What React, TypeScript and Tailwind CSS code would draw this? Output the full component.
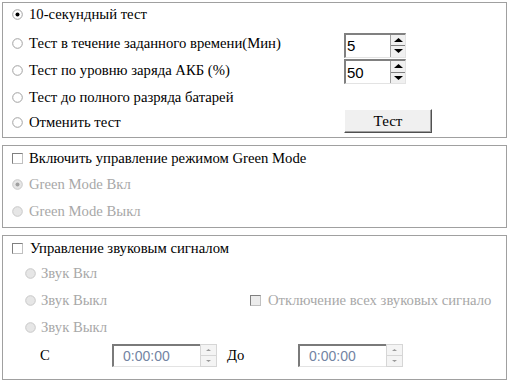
import React from "react";

function Radio({ checked = false, disabled = false }: { checked?: boolean; disabled?: boolean }) {
  return (
    <svg width="11" height="11" viewBox="0 0 11 11" className="shrink-0">
      <circle cx="5.5" cy="5.5" r="4.8" fill={disabled ? "#e6e6e6" : "#ffffff"} stroke={disabled ? "#c8c8c8" : "#a0a0a0"} strokeWidth="1" />
      {checked && <circle cx="5.5" cy="5.5" r="2" fill={disabled ? "#a0a0a0" : "#000000"} />}
    </svg>
  );
}

function Check({ disabled = false }: { disabled?: boolean }) {
  return (
    <div
      className={`w-[11px] h-[11px] shrink-0 border border-t-[#808080] border-l-[#808080] border-r-[#c0c0c0] border-b-[#c0c0c0] ${
        disabled ? "bg-[#ececec]" : "bg-white"
      }`}
    />
  );
}

function Arrow({ up, color = "#000", size = 4 }: { up: boolean; color?: string; size?: number }) {
  return (
    <svg width={size * 2 + 1} height={size} viewBox={`0 0 ${size * 2 + 1} ${size}`}>
      {up ? (
        <polygon points={`0,${size} ${size * 2 + 1},${size} ${size + 0.5},0`} fill={color} />
      ) : (
        <polygon points={`0,0 ${size * 2 + 1},0 ${size + 0.5},${size}`} fill={color} />
      )}
    </svg>
  );
}

function Spin({ value }: { value: string }) {
  return (
    <div className="flex w-[62px] h-[25px] border-t-2 border-l-2 border-t-[#808080] border-l-[#808080] border-r border-b border-r-[#e3e3e3] border-b-[#e3e3e3] bg-white">
      <div className="flex-1 flex items-center pl-[1px] font-['Liberation_Sans'] text-[15px] text-black leading-none">
        {value}
      </div>
      <div className="w-[15px] flex flex-col border-l border-l-[#a0a0a0]">
        <div className="flex-1 flex items-center justify-center bg-[#f0f0f0] border-b border-b-[#808080]">
          <Arrow up size={4} />
        </div>
        <div className="flex-1 flex items-center justify-center bg-[#f0f0f0]">
          <Arrow up={false} size={4} />
        </div>
      </div>
    </div>
  );
}

function TimeBox() {
  return (
    <div className="flex h-[23px] w-[105px]">
      <div className="w-[88px] h-full flex items-center pl-[9px] border-t-2 border-l-2 border-t-[#7a7a7a] border-l-[#7a7a7a] border-b border-b-[#e3e3e3] bg-white font-['Liberation_Sans'] text-[14px] text-[#7384a3] leading-none">
        0:00:00
      </div>
      <div className="w-[17px] h-full flex flex-col">
        <div className="flex-1 flex items-center justify-center bg-[#f4f4f4] border border-[#d6d6d6]">
          <Arrow up size={2} color="#9a9a9a" />
        </div>
        <div className="flex-1 flex items-center justify-center bg-[#f4f4f4] border border-t-0 border-[#d6d6d6]">
          <Arrow up={false} size={2} color="#9a9a9a" />
        </div>
      </div>
    </div>
  );
}

function Panel({ className = "", children }: { className?: string; children: React.ReactNode }) {
  return <div className={`mx-[2px] border border-[#a0a0a0] ${className}`}>{children}</div>;
}

export default function App() {
  const dis = "text-[#a8a8a8]";
  return (
    <div className="w-[510px] h-[382px] bg-white pt-[2px] font-['Liberation_Serif'] text-[14.7px] text-black leading-none overflow-hidden">
      <Panel className="w-[505px] h-[136px] pb-[3px]">
        <div className="flex items-center h-[22px] pl-[9px] gap-[6px]">
          <Radio checked />
          <span>10-секундный тест</span>
        </div>
        <div className="flex items-center h-[24px] mt-[8px] pl-[9px]">
          <div className="flex items-center gap-[6px] w-[332px] -mt-[3px]">
            <Radio />
            <span>Тест в течение заданного времени(Мин)</span>
          </div>
          <Spin value="5" />
        </div>
        <div className="flex items-center h-[25px] mt-[2px] pl-[9px]">
          <div className="flex items-center gap-[6px] w-[332px] -mt-[2px]">
            <Radio />
            <span>Тест по уровню заряда АКБ (%)</span>
          </div>
          <Spin value="50" />
        </div>
        <div className="flex items-center h-[22px] mt-[2px] pl-[9px] gap-[6px]">
          <Radio />
          <span>Тест до полного разряда батарей</span>
        </div>
        <div className="flex items-center h-[24px] mt-[1px] pl-[9px]">
          <div className="flex items-center gap-[6px] w-[332px] mt-[3px]">
            <Radio />
            <span>Отменить тест</span>
          </div>
          <button className="w-[88px] h-[24px] bg-[#f0f0f0] border border-t-white border-l-white border-r-[#505050] border-b-[#505050] shadow-[inset_-1px_-1px_0_#a0a0a0] text-[15px] leading-none font-['Liberation_Serif']">
            Тест
          </button>
        </div>
      </Panel>

      <Panel className="w-[505px] h-[83px] mt-[7px]">
        <div className="flex items-center h-[25px] pl-[9px] gap-[6px]">
          <Check />
          <span>Включить управление режимом Green Mode</span>
        </div>
        <div className="flex items-center h-[27px] pl-[9px] gap-[6px]">
          <Radio checked disabled />
          <span className={dis}>Green Mode Вкл</span>
        </div>
        <div className="flex items-center h-[27px] pl-[9px] gap-[6px]">
          <Radio disabled />
          <span className={dis}>Green Mode Выкл</span>
        </div>
      </Panel>

      <Panel className="w-[505px] h-[145px] mt-[7px]">
        <div className="flex items-center h-[24px] pl-[9px] gap-[7px]">
          <Check />
          <span>Управление звуковым сигналом</span>
        </div>
        <div className="flex items-center h-[27px] pl-[22px] gap-[5px]">
          <Radio disabled />
          <span className={dis}>Звук Вкл</span>
        </div>
        <div className="flex items-center h-[27px] pl-[22px]">
          <div className="flex items-center gap-[5px] w-[225px]">
            <Radio disabled />
            <span className={dis}>Звук Выкл</span>
          </div>
          <div className="flex items-center gap-[7px] whitespace-nowrap">
            <Check disabled />
            <span className={dis}>Отключение всех звуковых сигнало</span>
          </div>
        </div>
        <div className="flex items-center h-[27px] pl-[22px] gap-[5px]">
          <Radio disabled />
          <span className={dis}>Звук Выкл</span>
        </div>
        <div className="flex items-center h-[28px] pl-[37px]">
          <span className="w-[72px]">С</span>
          <TimeBox />
          <span className="w-[81px] pl-[10px]">До</span>
          <TimeBox />
        </div>
      </Panel>
    </div>
  );
}
